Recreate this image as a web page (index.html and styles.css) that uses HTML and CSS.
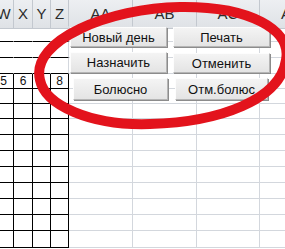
FILE: index.html
```html
<!DOCTYPE html>
<html lang="ru">
<head>
    <meta charset="UTF-8">
    <title>Журнал</title>
    <link rel="stylesheet" href="styles.css">
</head>
<body>
    <div class="sheet">
        <div class="head">
            <div class="hc">W</div>
            <div class="hc">X</div>
            <div class="hc">Y</div>
            <div class="hc">Z</div>
            <div class="hc">AA</div>
            <div class="hc">AB</div>
            <div class="hc">AC</div>
            <div class="hc">AD</div>
        </div>

        <div class="cells">
            <div class="c t"></div><div class="c t"></div><div class="c t"></div><div class="c t"></div><div class="c"></div><div class="c"></div><div class="c"></div><div class="c"></div>
            <div class="c t"></div><div class="c t"></div><div class="c t"></div><div class="c t"></div><div class="c"></div><div class="c"></div><div class="c"></div><div class="c"></div>
            <div class="c t"></div><div class="c t"></div><div class="c t"></div><div class="c t"></div><div class="c"></div><div class="c"></div><div class="c"></div><div class="c"></div>
            <div class="c b">5</div><div class="c b">6</div><div class="c b"></div><div class="c b">8</div><div class="c"></div><div class="c"></div><div class="c"></div><div class="c"></div>
            <div class="c b"></div><div class="c b"></div><div class="c b"></div><div class="c b"></div><div class="c"></div><div class="c"></div><div class="c"></div><div class="c"></div>
            <div class="c b"></div><div class="c b"></div><div class="c b"></div><div class="c b"></div><div class="c"></div><div class="c"></div><div class="c"></div><div class="c"></div>
            <div class="c b"></div><div class="c b"></div><div class="c b"></div><div class="c b"></div><div class="c"></div><div class="c"></div><div class="c"></div><div class="c"></div>
            <div class="c b"></div><div class="c b"></div><div class="c b"></div><div class="c b"></div><div class="c"></div><div class="c"></div><div class="c"></div><div class="c"></div>
            <div class="c b"></div><div class="c b"></div><div class="c b"></div><div class="c b"></div><div class="c"></div><div class="c"></div><div class="c"></div><div class="c"></div>
            <div class="c b"></div><div class="c b"></div><div class="c b"></div><div class="c b"></div><div class="c"></div><div class="c"></div><div class="c"></div><div class="c"></div>
            <div class="c b"></div><div class="c b"></div><div class="c b"></div><div class="c b"></div><div class="c"></div><div class="c"></div><div class="c"></div><div class="c"></div>
            <div class="c b"></div><div class="c b"></div><div class="c b"></div><div class="c b"></div><div class="c"></div><div class="c"></div><div class="c"></div><div class="c"></div>
            <div class="c b"></div><div class="c b"></div><div class="c b"></div><div class="c b"></div><div class="c"></div><div class="c"></div><div class="c"></div><div class="c"></div>
            <div class="c b"></div><div class="c b"></div><div class="c b"></div><div class="c b"></div><div class="c"></div><div class="c"></div><div class="c"></div><div class="c"></div>
        </div>

        <!-- кнопки макроса лежат поверх ячеек -->
        <div class="buttons">
            <button>Новый день</button>
            <button>Печать</button>
            <button>Назначить</button>
            <button class="lower">Отменить</button>
            <button class="shift">Болюсно</button>
            <button class="narrow">Отм.болюс</button>
        </div>

        <svg class="mark" width="285" height="249" viewBox="0 0 285 249">
            <path d="M40 80 C30 40 110 8 180 7 C250 6 292 30 286 60 C280 100 220 122 150 124 C90 126 45 105 40 80 Z"
                  fill="none" stroke="#e3131c" stroke-width="10"/>
        </svg>
    </div>
</body>
</html>
```

FILE: styles.css
```css
body {
    margin: 0;
    padding: 0;
    background: #ffffff;
    font-family: 'Liberation Sans', Arial, sans-serif;
}
.sheet {
    position: relative;
    width: 285px;
    height: 249px;
    overflow: hidden;
}
.head,
.cells {
    display: grid;
    grid-template-columns: 14px 19px 18px 18px 64px 64px 63px 26px;
}
.head {
    height: 26px;
}
.hc {
    box-sizing: border-box;
    border-right: 1px solid #c3c8cf;
    border-bottom: 1px solid #c3c8cf;
    background: linear-gradient(#edeff2, #dfe2e6);
    color: #2b2b2b;
    font-size: 15px;
    line-height: 28px;
    text-align: center;
}
.hc:first-child {
    text-indent: -6px;
}
.hc:last-child {
    text-align: left;
    padding-left: 21px;
}
.cells {
    grid-template-rows: 16px 16px 16px 15px 15px 15px 16px 16px 16px 16px 16px 16px 16px 17px;
}
.c {
    box-sizing: border-box;
    border-right: 1px solid #d3d7dd;
    border-bottom: 1px solid #d3d7dd;
    font-size: 12px;
    line-height: 15px;
    text-align: center;
    color: #111;
}
.c.t {
    border-right-color: transparent;
    border-bottom: 1px solid #000;
}
.c.t:nth-child(8n+4) {
    border-right-color: #d3d7dd;
}
.c.b {
    border-right: 1px solid #000;
    border-bottom: 1px solid #000;
}
.c.b:nth-child(8n+1) {
    text-indent: -6px;
}
.buttons {
    position: absolute;
    left: 70px;
    top: 27px;
    display: grid;
    grid-template-columns: 97px 97px;
    grid-template-rows: 20px 21px 22px;
    column-gap: 6px;
    row-gap: 5px;
}
button {
    box-sizing: border-box;
    margin: 0;
    padding: 0;
    background: linear-gradient(#f4f4f4, #e4e4e4);
    border: 1px solid #b5b5b5;
    border-top-color: #fdfdfd;
    border-left-color: #fdfdfd;
    box-shadow: 1px 1px 0 #8c8c8c;
    font-family: 'Liberation Sans', Arial, sans-serif;
    font-size: 13px;
    color: #111;
}
button.lower {
    margin-top: 1px;
}
button.shift {
    margin-left: 3px;
    margin-right: -1px;
}
button.narrow {
    margin-left: 2px;
    margin-right: 2px;
}
.mark {
    position: absolute;
    left: 0;
    top: 0;
}
```
